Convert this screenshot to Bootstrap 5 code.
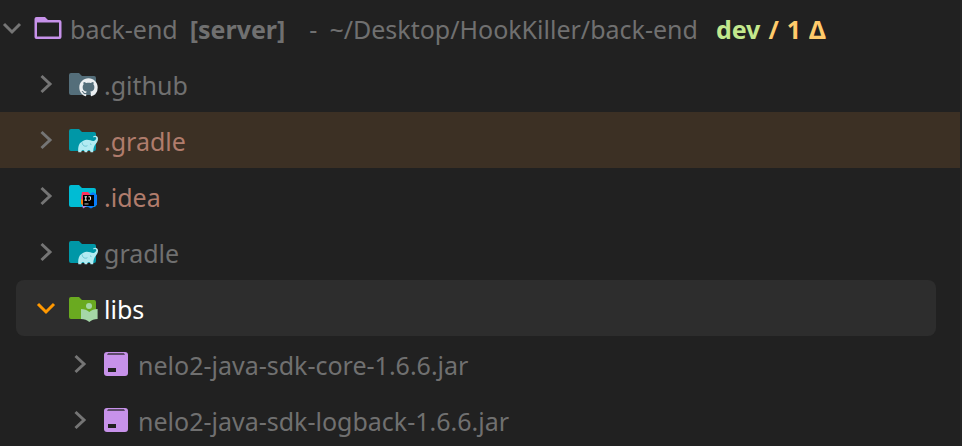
<!DOCTYPE html>
<html lang="en" data-bs-theme="dark">
<head>
<meta charset="utf-8">
<meta name="viewport" content="width=device-width, initial-scale=1">
<title>Project</title>
<link href="https://cdn.jsdelivr.net/npm/bootstrap@5.3.0/dist/css/bootstrap.min.css" rel="stylesheet">
<style>
body { background: #212121; color: #707070; font-family: "Noto Sans", "Open Sans", sans-serif; font-size: 25px; line-height: 32px; }
.project-tree { border-right: 2px solid #252525; }
.tree-item { height: 56px; padding: 0; color: inherit; background: none; font-size: 25px; line-height: 32px; border: 0; }
.item-text { padding-top: 2px; }
.level-1 { padding-left: 34px; }
.level-2 { padding-left: 68px; }
.chevron { width: 24px; height: 24px; margin-right: 10px; fill: none; stroke: #757575; stroke-width: 3; }
.glyph { width: 32px; height: 32px; margin-right: 4px; }
.ignored { background: #3c3024; }
.ignored, .excluded { color: #b07c6c; }
.picked { margin: 0 24px 0 16px; padding-left: 18px; background: #2d2d2d; color: #fff; border-radius: 8px; }
.picked .chevron { stroke: #ff9800; }
.module { margin-left: 12px; }
.location { margin-left: 24px; gap: 12px; }
.branch { color: #c3e88d; margin-left: 18px; }
.changes { color: #ffcb6b; margin-left: 8px; gap: 8px; }
</style>
</head>
<body class="overflow-hidden">
<svg class="d-none" aria-hidden="true">
  <symbol id="right" viewBox="0 0 24 24"><path d="M7.500 4l8.500 8-8.500 8"/></symbol>
  <symbol id="down" viewBox="0 0 24 24"><path d="M4 8l8 8 8-8"/></symbol>
  <symbol id="folder" viewBox="0 0 32 32"><path d="M3 5h8l3 3h12a2 2 0 0 1 2 2v15a2 2 0 0 1-2 2H3a2 2 0 0 1-2-2V7a2 2 0 0 1 2-2z"/></symbol>
  <symbol id="elephant" viewBox="0 0 32 32">
    <path fill="#b2ebf2" d="M10.300 28.200c-.5-4.700.5-9 3.500-10.400 1.500-1.100 2.600-1.900 4.700-2 3-.2 5.200 1.400 7.200 1.100 1.600-.3 2.600-1.700 2.500-2.800-.1-1.100-1.300-1.300-2.500-.5l-.7-1.100c2.300-1.500 4.800-.6 5 1.900.2 3-1.800 4.800-3.100 6.700-1.100 1.700-1.600 4-1.700 7.100h-2.700c-.1-1.500-.7-2.200-1.600-2.200s-1.600.7-1.700 2.200h-2.600c-.1-1.500-.7-2.200-1.600-2.200s-1.600.7-1.700 2.200z"/>
    <path fill="none" stroke="#4db6c4" stroke-width=".7" d="M14.200 18.500c0 2.800 2.500 4.600 5.200 3.200M22 19.800l1.400.7"/>
  </symbol>
  <symbol id="jar" viewBox="0 0 32 32">
    <rect x="2" y="4" width="24" height="24" rx="3" fill="#c792ea"/>
    <path fill="#5e4b6b" d="M6 5h16l1 2H5z"/><path fill="#212121" d="M6 20h8v4H6z"/>
  </symbol>
</svg>

<main class="project-tree d-flex flex-column text-nowrap">
  <button type="button" class="tree-item d-flex align-items-center text-start" aria-expanded="true">
    <svg class="chevron flex-shrink-0"><use href="#down"/></svg>
    <svg class="glyph flex-shrink-0" viewBox="0 0 32 32"><path fill="#c792ea" fill-rule="evenodd" d="M2.500 5H11l3 3h11.500a2 2 0 0 1 2 2v15a2 2 0 0 1-2 2h-23a2 2 0 0 1-2-2V7a2 2 0 0 1 2-2zM3 10.500v14h22v-14z"/></svg>
    <span class="item-text">back-end</span>
    <b class="item-text module">[server]</b>
    <span class="item-text location d-flex"><span>-</span> <span>~/Desktop/HookKiller/back-end</span></span>
    <b class="item-text branch">dev</b>
    <b class="item-text changes d-flex"><span>/</span> <span>1</span> <span>Δ</span></b>
  </button>
  <button type="button" class="tree-item level-1 d-flex align-items-center text-start" aria-expanded="false">
    <svg class="chevron flex-shrink-0"><use href="#right"/></svg>
    <svg class="glyph flex-shrink-0" viewBox="0 0 32 32"><use href="#folder" fill="#546e7a"/><path fill="#eceff1" transform="translate(11.300 10.300) scale(1.150)" d="M8 0C3.580 0 0 3.580 0 8c0 3.540 2.290 6.530 5.470 7.590.4.070.55-.17.55-.38 0-.19-.01-.82-.01-1.490-2.010.37-2.530-.49-2.690-.94-.09-.23-.48-.94-.82-1.130-.28-.15-.68-.52-.01-.53.63-.01 1.080.58 1.230.82.72 1.210 1.870.87 2.330.66.07-.52.28-.87.51-1.070-1.780-.2-3.640-.89-3.640-3.950 0-.87.31-1.590.82-2.150-.08-.2-.36-1.020.08-2.120 0 0 .67-.21 2.200.82.64-.18 1.320-.27 2-.27.68 0 1.360.09 2 .27 1.530-1.040 2.200-.82 2.200-.82.44 1.100.16 1.920.08 2.120.51.56.82 1.270.82 2.150 0 3.070-1.870 3.750-3.650 3.950.29.25.54.73.54 1.480 0 1.070-.01 1.930-.01 2.200 0 .21.15.46.55.38A8 8 0 0 0 16 8c0-4.420-3.580-8-8-8z"/></svg>
    <span class="item-text">.github</span>
  </button>
  <button type="button" class="tree-item level-1 ignored d-flex align-items-center text-start" aria-expanded="false">
    <svg class="chevron flex-shrink-0"><use href="#right"/></svg>
    <svg class="glyph flex-shrink-0" viewBox="0 0 32 32"><use href="#folder" fill="#0097a7"/><use href="#elephant"/></svg>
    <span class="item-text">.gradle</span>
  </button>
  <button type="button" class="tree-item level-1 excluded d-flex align-items-center text-start" aria-expanded="false">
    <svg class="chevron flex-shrink-0"><use href="#right"/></svg>
    <svg class="glyph flex-shrink-0" viewBox="0 0 32 32"><use href="#folder" fill="#00bcd4"/>
      <path fill="#fe315d" d="M14 12h6l6 6-9 7-4-6z"/><path fill="#f97a12" d="M13 19l4 1v6l-4-2z"/><path fill="#087cfa" d="M25 12l4 3v10l-6 3.500-5-2.500 4-12z"/><path fill="#b07be0" d="M14 25l5 1-4 2.500z"/>
      <path d="M15 15h11v11H15z"/><path fill="none" stroke="#fff" stroke-width=".9" d="M16.500 16.800h2.500M17.750 16.800v3.400M16.500 20.200h2.500M20.500 16.800h2v2.600q0 .8-.9.8h-1.300"/><path fill="#ccc" d="M16.500 23.500h4v.9h-4z"/></svg>
    <span class="item-text">.idea</span>
  </button>
  <button type="button" class="tree-item level-1 d-flex align-items-center text-start" aria-expanded="false">
    <svg class="chevron flex-shrink-0"><use href="#right"/></svg>
    <svg class="glyph flex-shrink-0" viewBox="0 0 32 32"><use href="#folder" fill="#0097a7"/><use href="#elephant"/></svg>
    <span class="item-text">gradle</span>
  </button>
  <button type="button" class="tree-item picked d-flex align-items-center text-start" aria-expanded="true">
    <svg class="chevron flex-shrink-0"><use href="#down"/></svg>
    <svg class="glyph flex-shrink-0" viewBox="0 0 32 32"><use href="#folder" fill="#6aaa20"/><g fill="#a5d6a7"><circle cx="21" cy="14" r="3"/><path d="M13 17q5 0 8.300 3 3.300-3 8.300-3v10q-5 0-8.300 3-3.300-3-8.300-3z"/></g></svg>
    <span class="item-text">libs</span>
  </button>
  <button type="button" class="tree-item level-2 d-flex align-items-center text-start" aria-expanded="false">
    <svg class="chevron flex-shrink-0"><use href="#right"/></svg>
    <svg class="glyph flex-shrink-0"><use href="#jar"/></svg>
    <span class="item-text">nelo2-java-sdk-core-1.6.6.jar</span>
  </button>
  <button type="button" class="tree-item level-2 d-flex align-items-center text-start" aria-expanded="false">
    <svg class="chevron flex-shrink-0"><use href="#right"/></svg>
    <svg class="glyph flex-shrink-0"><use href="#jar"/></svg>
    <span class="item-text">nelo2-java-sdk-logback-1.6.6.jar</span>
  </button>
</main>
<script src="https://cdn.jsdelivr.net/npm/bootstrap@5.3.0/dist/js/bootstrap.bundle.min.js"></script>
</body>
</html>
